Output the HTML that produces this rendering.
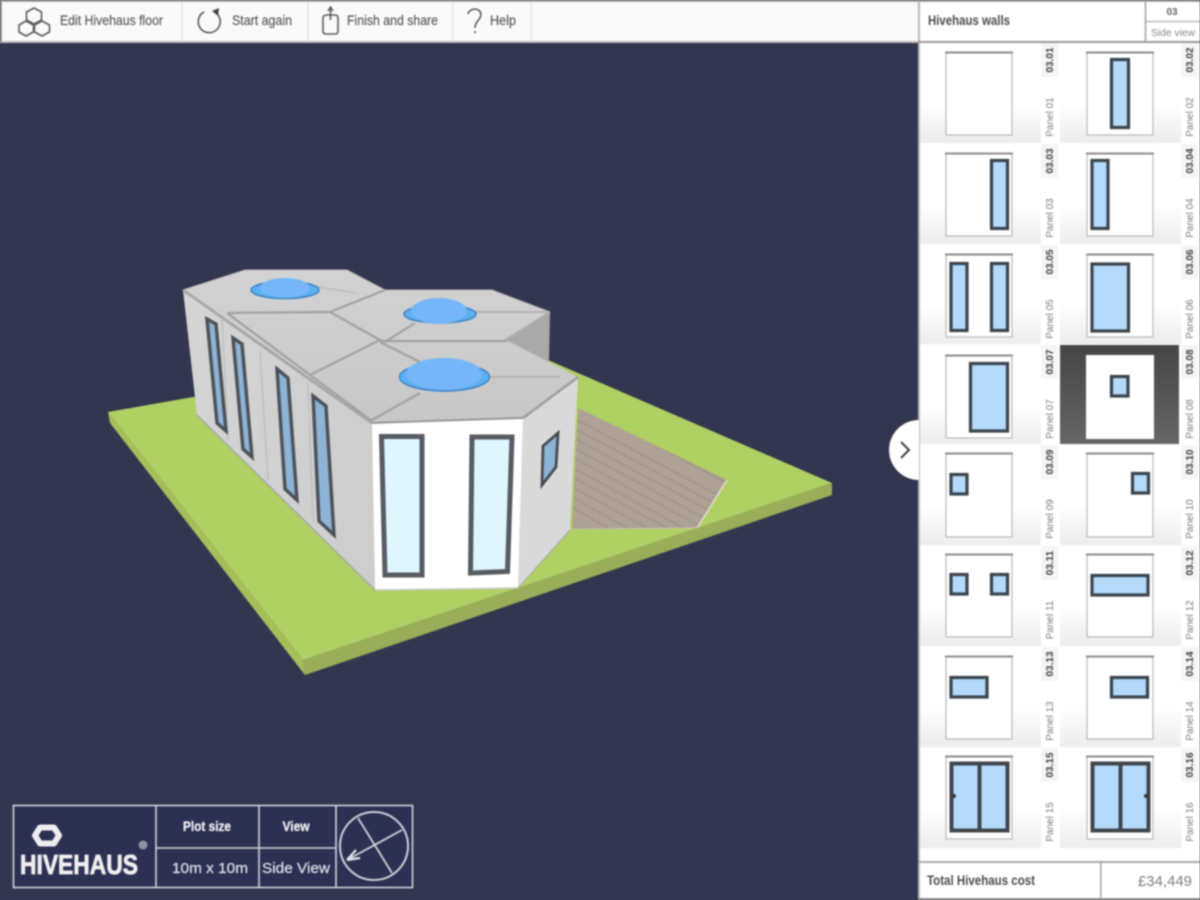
<!DOCTYPE html>
<html><head><meta charset="utf-8"><title>Hivehaus</title>
<style>
html,body{margin:0;padding:0;width:1200px;height:900px;overflow:hidden;background:#32364f}
svg{display:block;position:absolute;left:0;top:0;filter:blur(.8px)}
text{font-family:"Liberation Sans Narrow","Liberation Sans",sans-serif}
.tb{font-size:14px;fill:#5c5c5c;stroke:#5c5c5c;stroke-width:.2}
.code{font-size:10px;font-weight:bold;fill:#444}
.pn{font-size:10px;fill:#7c7c7c}
.w{fill:#b3d9fb;stroke:#3a444c;stroke-width:3.200}
.f{fill:#fff;stroke:#b4b4b4;stroke-width:1.100}
.ft{stroke:#8e8e8e;stroke-width:2}
.fr{fill:#8db3d6;stroke:#4c5158;stroke-width:3.400}
.lite{fill:#e2e5ec;font-size:15px;stroke:#e2e5ec;stroke-width:.2}
.ic{fill:none;stroke:#5c5c5c;stroke-width:1.600}
</style></head><body>
<svg width="1200" height="900" viewBox="0 0 1200 900" xmlns="http://www.w3.org/2000/svg">
<defs>
<linearGradient id="cg" x1="0" y1="0" x2="0" y2="1"><stop offset=".6" stop-color="#fff"/><stop offset="1" stop-color="#ececec"/></linearGradient>
<linearGradient id="sel" x1="0" y1="0" x2="0" y2="1"><stop offset="0" stop-color="#454545"/><stop offset="1" stop-color="#666"/></linearGradient>
<linearGradient id="lw" x1="0" y1="0" x2="1" y2="0"><stop offset="0" stop-color="#d4d4d4"/><stop offset="1" stop-color="#cdcdcd"/></linearGradient>
<linearGradient id="rf" x1="0" y1="0" x2="0" y2="1"><stop offset="0" stop-color="#d2d2d2"/><stop offset="1" stop-color="#c6c6c6"/></linearGradient>
<clipPath id="dk"><polygon points="578,408 727,480 697,528 572,529"/></clipPath>
</defs>
<rect width="1200" height="900" fill="#32364f"/>

<!-- Ground -->
<polygon points="108,412 303,660 305,675 110,423" fill="#a6bf5b"/>
<polygon points="303,660 832,483 832,495 305,675" fill="#9aad58"/>
<polygon points="108,412 193,397 548,360 832,483 303,660" fill="#afd062"/>

<!-- Deck -->
<polygon points="578,408 727,480 697,528 572,529" fill="#aea196"/>
<g clip-path="url(#dk)" stroke="#978a80" stroke-width="1.600" opacity=".55">
<path d="M570,416 L740,507M570,426 L740,517M570,436 L740,527M570,446 L740,537M570,456 L720,537M570,466 L700,537M570,476 L680,535M570,486 L660,535M570,496 L640,535M570,506 L620,535M590,410 L740,490M610,412 L740,482"/>
</g>
<path d="M727,480 L697,528" stroke="#e4dfd8" stroke-width="1.500"/>
<path d="M572,529 L697,528" stroke="#c6c0b4" stroke-width="1"/>

<!-- Back hex wall -->
<polygon points="505,340 550,312 549,362 540,358" fill="#a9a9a9"/>

<!-- Walls -->
<polygon points="183,290 372,423 375,590 197,415" fill="url(#lw)"/>
<path d="M197,415 L375,590" stroke="#a8a8a8" stroke-width="1.500"/>
<path d="M222,315 L228,441M260,350 L268,480M308,383 L313,522" stroke="#b8b8b8" stroke-width="1"/>
<polygon class="fr" points="207,319 216,324 226,431 217,423"/>
<polygon class="fr" points="233,338 242,344 252,457 243,449"/>
<polygon class="fr" points="277,369 288,378 297,500 285,489"/>
<polygon class="fr" points="313,396 326,406 334,535 319,521"/>

<polygon points="372,423 523,418 518,588 375,590" fill="#fff"/>
<path d="M375,590 L518,588" stroke="#c9c9c9" stroke-width="1.500"/>
<polygon points="381.500,436.500 422,436.500 422,575 385,575" fill="#dff5ff" stroke="#565c62" stroke-width="5"/>
<polygon points="472,437 512,437 507.500,571.500 470.500,573" fill="#dff5ff" stroke="#565c62" stroke-width="5"/>

<polygon points="523,418 578,377 570,530 518,588" fill="#d9d9d9"/>
<path d="M518,588 L570,530" stroke="#a9a9a9" stroke-width="1"/>
<polygon points="543,446 558,433 556,467 542,485" fill="#8db3d6" stroke="#454b52" stroke-width="2.800"/>

<!-- Roof -->
<polygon points="183,290 245,270 347,270 385,290 492,290 550,312 505,340 510,342 578,377 523,418 372,423" fill="url(#rf)"/>
<g stroke="#a2a2a2" stroke-width="2.200" fill="none">
<path d="M227,313 L330,312 L385,290"/>
<path d="M330,312 L380,340 L310,375 L227,313"/>
<path d="M183,290 L372,423" stroke-width="2.800" stroke="#a6a6a6"/>
<path d="M310,375 L372,421"/>
<path d="M380,341 L507,341"/>
<path d="M380,342 L420,362"/>
<path d="M372,420 L420,393"/>
<path d="M385,342 L415,323"/>
<path d="M488,377 L560,377" stroke="#aaa" stroke-width="1.400"/>
<path d="M474,312 L548,312" stroke="#aaa" stroke-width="1.400"/>
<path d="M318,287 L357,293" stroke="#b4b4b4" stroke-width="1"/>
<path d="M505,340 L550,312" stroke="#b0b0b0" stroke-width="2"/>
<path d="M372,423 L523,418" stroke="#8f8f8f" stroke-width="1.800"/>
<path d="M523,418 L578,377" stroke="#9e9e9e" stroke-width="2.600"/>
<path d="M183,290 L245,270 L347,270" stroke="#bdbdbd" stroke-width="1"/>
<path d="M347,270 L385,290 L492,290 L550,312" stroke="#b8b8b8" stroke-width="1"/>
</g>

<!-- Domes -->
<g stroke="#357fc2" stroke-width="1.400">
<ellipse cx="285" cy="290" rx="34" ry="8.500" fill="#5cb0f2"/>
<ellipse cx="285" cy="288" rx="25" ry="10" fill="#74b6f8" stroke="none"/>
<ellipse cx="440" cy="314" rx="36" ry="9" fill="#5cb0f2"/>
<ellipse cx="439" cy="311" rx="28" ry="13" fill="#74b6f8" stroke="none"/>
<ellipse cx="444.500" cy="377" rx="45" ry="14" fill="#5cb0f2"/>
<ellipse cx="444" cy="374" rx="38" ry="16" fill="#74b6f8" stroke="none"/>
</g>

<!-- Top bar -->
<rect x="2" y="0" width="916" height="42" fill="#fafafa"/>
<rect x="0" y="0" width="2" height="43" fill="#9a9a9a"/>
<rect x="0" y="0" width="918" height="2" fill="#a8a8a8"/>
<rect x="0" y="41" width="918" height="2" fill="#bdbdbd"/>
<path d="M182,2V41M308,2V41M453,2V41M531,2V41" stroke="#e2e2e2" stroke-width="1.200"/>
<g class="ic">
<polygon points="34,8 41.500,12 41.500,20 34,24 26.500,20 26.500,12" stroke-linejoin="round"/>
<polygon points="26,21 33.500,25 33.500,32 26,36 19,32 19,25" stroke-linejoin="round"/>
<polygon points="42,21 49.500,25 49.500,32 42,36 34.500,32 34.500,25" stroke-linejoin="round"/>
<path d="M204,12 A11,11 0 1 0 218,15 L217,13"/>
<polygon points="212,11 219,8 218,16" fill="#444" stroke="none"/>
<path d="M327,15 H335 Q338,15 338,18 L338,31 Q338,34 335,34 H326 Q323,34 323,31 L323,18 Q323,15 327,15 Z M330.500,20 V8 M328,11 L330.500,7 L333,11"/>
<path d="M468,14 C469,8 480,7 481,14 C481,20 475,21 475,28 M475,31 V33"/>
</g>
<text class="tb" x="60" y="25" textLength="103" lengthAdjust="spacingAndGlyphs">Edit Hivehaus floor</text>
<text class="tb" x="232" y="25" textLength="60" lengthAdjust="spacingAndGlyphs">Start again</text>
<text class="tb" x="347" y="25" textLength="91" lengthAdjust="spacingAndGlyphs">Finish and share</text>
<text class="tb" x="490" y="25" textLength="26" lengthAdjust="spacingAndGlyphs">Help</text>

<!-- Right panel -->
<rect x="918" y="0" width="282" height="900" fill="#fff"/>
<rect x="918" y="0" width="2" height="900" fill="#b8b8b8"/>
<rect x="918" y="0" width="282" height="2" fill="#a8a8a8"/>
<rect x="918" y="41" width="282" height="2" fill="#999"/>
<path d="M1145.500,2V41" stroke="#8a8a8a" stroke-width="1.200"/>
<path d="M1146,21.500H1200" stroke="#bbb" stroke-width="1.500"/>
<text x="928" y="25" font-size="14" font-weight="bold" fill="#4c4c4c" textLength="82" lengthAdjust="spacingAndGlyphs">Hivehaus walls</text>
<text x="1172" y="15" font-size="10" font-weight="bold" fill="#666" text-anchor="middle">03</text>
<text x="1151" y="36" font-size="10" fill="#888" textLength="44" lengthAdjust="spacingAndGlyphs">Side view</text>

<!-- Cell backgrounds -->
<g fill="url(#cg)">
<rect x="920" y="43" width="121" height="100"/><rect x="1060" y="43" width="121" height="100"/>
<rect x="920" y="144" width="121" height="100"/><rect x="1060" y="144" width="121" height="100"/>
<rect x="920" y="245" width="121" height="99"/><rect x="1060" y="245" width="121" height="99"/>
<rect x="920" y="345" width="121" height="99"/>
<rect x="920" y="445" width="121" height="100"/><rect x="1060" y="445" width="121" height="100"/>
<rect x="920" y="546" width="121" height="100"/><rect x="1060" y="546" width="121" height="100"/>
<rect x="920" y="647" width="121" height="100"/><rect x="1060" y="647" width="121" height="100"/>
<rect x="920" y="748" width="121" height="100"/><rect x="1060" y="748" width="121" height="100"/>
</g>
<rect x="1060" y="345" width="119" height="99" fill="url(#sel)"/>
<!-- code strips -->
<g fill="#f5f5f5">
<rect x="1041" y="43" width="17" height="34"/><rect x="1181" y="43" width="17" height="34"/>
<rect x="1041" y="144" width="17" height="34"/><rect x="1181" y="144" width="17" height="34"/>
<rect x="1041" y="245" width="17" height="34"/><rect x="1181" y="245" width="17" height="34"/>
<rect x="1041" y="345" width="17" height="34"/><rect x="1181" y="345" width="17" height="34"/>
<rect x="1041" y="445" width="17" height="34"/><rect x="1181" y="445" width="17" height="34"/>
<rect x="1041" y="546" width="17" height="34"/><rect x="1181" y="546" width="17" height="34"/>
<rect x="1041" y="647" width="17" height="34"/><rect x="1181" y="647" width="17" height="34"/>
<rect x="1041" y="748" width="17" height="34"/><rect x="1181" y="748" width="17" height="34"/>
</g>

<!-- Frames -->
<g>
<rect class="f" x="946" y="53" width="66" height="82"/><path class="ft" d="M945,52.500H1013"/>
<rect class="f" x="1087" y="53" width="66" height="82"/><path class="ft" d="M1086,52.500H1154"/>
<rect class="f" x="946" y="154" width="66" height="82"/><path class="ft" d="M945,153.500H1013"/>
<rect class="f" x="1087" y="154" width="66" height="82"/><path class="ft" d="M1086,153.500H1154"/>
<rect class="f" x="946" y="255" width="66" height="82"/><path class="ft" d="M945,254.500H1013"/>
<rect class="f" x="1087" y="255" width="66" height="82"/><path class="ft" d="M1086,254.500H1154"/>
<rect class="f" x="946" y="356" width="66" height="82"/><path class="ft" d="M945,355.500H1013"/>
<rect x="1086" y="355" width="68" height="84" fill="#fff"/>
<rect class="f" x="946" y="454" width="66" height="83"/><path class="ft" d="M945,453.500H1013"/>
<rect class="f" x="1087" y="454" width="66" height="83"/><path class="ft" d="M1086,453.500H1154"/>
<rect class="f" x="946" y="555" width="66" height="82"/><path class="ft" d="M945,554.500H1013"/>
<rect class="f" x="1087" y="555" width="66" height="82"/><path class="ft" d="M1086,554.500H1154"/>
<rect class="f" x="946" y="657" width="66" height="82"/><path class="ft" d="M945,656.500H1013"/>
<rect class="f" x="1087" y="657" width="66" height="82"/><path class="ft" d="M1086,656.500H1154"/>
<rect class="f" x="946" y="757" width="66" height="82"/><path class="ft" d="M945,756.500H1013"/>
<rect class="f" x="1087" y="757" width="66" height="82"/><path class="ft" d="M1086,756.500H1154"/>
</g>

<!-- Windows -->
<rect class="w" x="1111.500" y="59.500" width="17" height="68"/>
<rect class="w" x="991.500" y="160.500" width="16" height="68"/>
<rect class="w" x="1092" y="160.500" width="16" height="68"/>
<rect class="w" x="951" y="263.500" width="16" height="67"/>
<rect class="w" x="991.500" y="263.500" width="16" height="67"/>
<rect class="w" x="1092" y="264" width="36.500" height="67"/>
<rect class="w" x="970.500" y="363.500" width="37" height="67.500"/>
<rect class="w" x="1111.500" y="376.500" width="16.500" height="19.500"/>
<rect class="w" x="951" y="474.500" width="16" height="19.500"/>
<rect class="w" x="1132.500" y="473.500" width="16" height="19.500"/>
<rect class="w" x="951" y="574.500" width="16" height="19.500"/>
<rect class="w" x="991.500" y="574.500" width="16" height="19.500"/>
<rect class="w" x="1092" y="575.500" width="56" height="19.500"/>
<rect class="w" x="951" y="677.500" width="36" height="19.500"/>
<rect class="w" x="1111.500" y="677.500" width="36" height="19.500"/>
<g>
<rect x="951.500" y="763.500" width="56" height="67" fill="#b3d9fb" stroke="#40464c" stroke-width="4"/>
<path d="M979.500,763V831" stroke="#40464c" stroke-width="4"/>
<circle cx="954" cy="796" r="2" fill="#333"/>
<rect x="1092.500" y="763.500" width="56" height="67" fill="#b3d9fb" stroke="#40464c" stroke-width="4"/>
<path d="M1120.500,763V831" stroke="#40464c" stroke-width="4"/>
<circle cx="1146" cy="796" r="2" fill="#333"/>
</g>

<!-- Labels -->
<g text-anchor="middle">
<text class="code" transform="translate(1053,60) rotate(-90)">03.01</text><text class="code" transform="translate(1193,60) rotate(-90)">03.02</text>
<text class="code" transform="translate(1053,161) rotate(-90)">03.03</text><text class="code" transform="translate(1193,161) rotate(-90)">03.04</text>
<text class="code" transform="translate(1053,262) rotate(-90)">03.05</text><text class="code" transform="translate(1193,262) rotate(-90)">03.06</text>
<text class="code" transform="translate(1053,362) rotate(-90)">03.07</text><text class="code" transform="translate(1193,362) rotate(-90)">03.08</text>
<text class="code" transform="translate(1053,462) rotate(-90)">03.09</text><text class="code" transform="translate(1193,462) rotate(-90)">03.10</text>
<text class="code" transform="translate(1053,563) rotate(-90)">03.11</text><text class="code" transform="translate(1193,563) rotate(-90)">03.12</text>
<text class="code" transform="translate(1053,664) rotate(-90)">03.13</text><text class="code" transform="translate(1193,664) rotate(-90)">03.14</text>
<text class="code" transform="translate(1053,765) rotate(-90)">03.15</text><text class="code" transform="translate(1193,765) rotate(-90)">03.16</text>
</g>
<g text-anchor="middle">
<text class="pn" transform="translate(1053,117) rotate(-90)">Panel 01</text><text class="pn" transform="translate(1193,117) rotate(-90)">Panel 02</text>
<text class="pn" transform="translate(1053,218) rotate(-90)">Panel 03</text><text class="pn" transform="translate(1193,218) rotate(-90)">Panel 04</text>
<text class="pn" transform="translate(1053,319) rotate(-90)">Panel 05</text><text class="pn" transform="translate(1193,319) rotate(-90)">Panel 06</text>
<text class="pn" transform="translate(1053,419) rotate(-90)">Panel 07</text><text class="pn" transform="translate(1193,419) rotate(-90)">Panel 08</text>
<text class="pn" transform="translate(1053,519) rotate(-90)">Panel 09</text><text class="pn" transform="translate(1193,519) rotate(-90)">Panel 10</text>
<text class="pn" transform="translate(1053,620) rotate(-90)">Panel 11</text><text class="pn" transform="translate(1193,620) rotate(-90)">Panel 12</text>
<text class="pn" transform="translate(1053,721) rotate(-90)">Panel 13</text><text class="pn" transform="translate(1193,721) rotate(-90)">Panel 14</text>
<text class="pn" transform="translate(1053,822) rotate(-90)">Panel 15</text><text class="pn" transform="translate(1193,822) rotate(-90)">Panel 16</text>
</g>

<!-- Footer -->
<rect x="920" y="848" width="280" height="52" fill="#fff"/>
<rect x="918" y="861" width="282" height="2" fill="#aaa"/>
<rect x="918" y="898" width="282" height="2" fill="#999"/>
<rect x="1100" y="862" width="1.500" height="37" fill="#aaa"/>
<text x="927" y="885" font-size="14" font-weight="bold" fill="#4c4c4c" textLength="108" lengthAdjust="spacingAndGlyphs">Total Hivehaus cost</text>
<text x="1138" y="886" font-size="15" fill="#7c7c7c" textLength="54" lengthAdjust="spacingAndGlyphs">£34,449</text>

<!-- Collapse tab -->
<path d="M919,420 A30,30 0 0 0 919,480 Z" fill="#fff"/>
<path d="M901,442 L909,450 L901,458" fill="none" stroke="#444" stroke-width="2"/>

<!-- Info panel -->
<rect x="13.500" y="805.500" width="399" height="82" fill="#2c3052" stroke="#d2d5dd" stroke-width="1.600"/>
<path d="M156,805V888M259,805V888M336,805V888M156,848H336" stroke="#d2d5dd" stroke-width="1.600" fill="none"/>
<polygon points="40,827.500 54,827.500 59,835.500 54,843.500 40,843.500 35,835.500" fill="none" stroke="#eee" stroke-width="6" stroke-linejoin="round"/>
<text x="20" y="874" font-size="28" font-weight="bold" fill="#f0f0f0" stroke="#f0f0f0" stroke-width=".8" textLength="118" lengthAdjust="spacingAndGlyphs">HIVEHAUS</text>
<circle cx="143" cy="845" r="4.500" fill="#8d90a0"/>
<text x="207" y="831" font-size="14" font-weight="bold" fill="#f0f0f4" stroke="#f0f0f4" stroke-width=".3" text-anchor="middle" textLength="48" lengthAdjust="spacingAndGlyphs">Plot size</text>
<text x="296" y="831" font-size="14" font-weight="bold" fill="#f0f0f4" stroke="#f0f0f4" stroke-width=".3" text-anchor="middle" textLength="27" lengthAdjust="spacingAndGlyphs">View</text>
<text class="lite" x="172" y="873" textLength="76" lengthAdjust="spacingAndGlyphs">10m x 10m</text>
<text class="lite" x="262" y="873" textLength="68" lengthAdjust="spacingAndGlyphs">Side View</text>
<circle cx="374" cy="846" r="34" fill="none" stroke="#cfd2da" stroke-width="2"/>
<path d="M358,818 L392,873 M402,830 L347,860" stroke="#cfd2da" stroke-width="1.800" fill="none"/>
<path d="M347,860 L356,850 M347,860 L360,858" stroke="#e6e8ee" stroke-width="2.200" fill="none"/>
</svg>
</body></html>
